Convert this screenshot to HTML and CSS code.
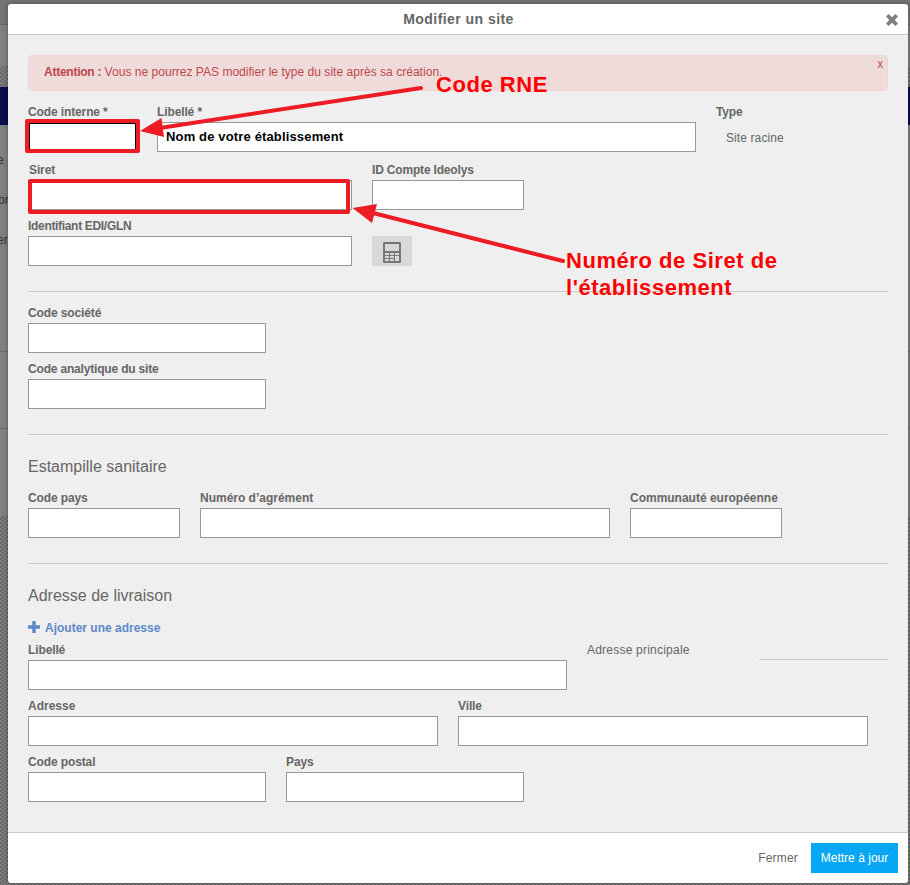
FILE: index.html
```html
<!DOCTYPE html>
<html lang="fr">
<head>
<meta charset="utf-8">
<title>Modifier un site</title>
<link rel="stylesheet" href="styles.css">
</head>
<body>
<div class="backdrop">
  <div class="bar-top"></div>
  <div class="bar-sub"></div>
  <div class="checker"></div>
  <div class="nav"></div>
  <div class="side"><span class="shift">e</span><span>pr</span><span class="shift">er</span></div>
  <div class="side-box"></div>
  <div class="side-end"></div>
</div>
<main class="modal">
  <header class="modal-head">
    <h1>Modifier un site</h1>
    <svg class="close" width="12" height="12" viewBox="0 0 12 12"><path d="M2.600 0 6 3.200 9.400 0 12 2.500 8.800 6l3.200 3.500L9.400 12 6 8.800 2.600 12 0 9.500 3.200 6 0 2.500z" fill="#808080"/></svg>
  </header>
  <section class="modal-body">
    <div class="alert"><p><b>Attention :</b> Vous ne pourrez PAS modifier le type du site après sa création.</p><span class="dismiss">x</span></div>
    <div class="row first">
      <div class="field w109"><label>Code interne *</label><input class="focused"></div>
      <div class="field w539"><label>Libellé *</label><input class="named" value="Nom de votre établissement"></div>
      <div class="field"><label>Type</label><p class="static">Site racine</p></div>
    </div>
    <div class="row">
      <div class="field w324"><label class="nudge">Siret</label><input></div>
      <div class="field w152"><label class="tight">ID Compte Ideolys</label><input></div>
    </div>
    <div class="row">
      <div class="field w324"><label class="tighter">Identifiant EDI/GLN</label><input></div>
      <button class="calc"><svg width="18" height="21" viewBox="0 0 18 21"><path fill="#777" fill-rule="evenodd" d="M1 0h16q1 0 1 1v19q0 1-1 1H1q-1 0-1-1V1q0-1 1-1zm1 2v7h14V2zM2 11v2h4v-2zm5 0v2h4v-2zm5 0v2h4v-2zM2 14v2h4v-2zm5 0v2h4v-2zm5 0v5h4v-5zM2 17v2h4v-2zm5 0v2h4v-2z"/></svg></button>
    </div>
    <hr>
    <div class="row"><div class="field w238"><label>Code société</label><input></div></div>
    <div class="row"><div class="field w238"><label class="tight">Code analytique du site</label><input></div></div>
    <hr>
    <h2>Estampille sanitaire</h2>
    <div class="row">
      <div class="field w152"><label>Code pays</label><input></div>
      <div class="field w410"><label class="normal">Numéro d’agrément</label><input></div>
      <div class="field w152"><label class="normal">Communauté européenne</label><input></div>
    </div>
    <hr>
    <h2>Adresse de livraison</h2>
    <a class="add"><svg width="12" height="12" viewBox="0 0 12 12"><path d="M4.300 0h3.400v4.300H12v3.400H7.700V12H4.300V7.700H0V4.300h4.300z" fill="#5e87c9"/></svg><span>Ajouter une adresse</span></a>
    <div class="row">
      <div class="field w539"><label>Libellé</label><input></div>
      <div class="main-address"><span>Adresse principale</span></div>
      <div class="rule"></div>
    </div>
    <div class="row">
      <div class="field w410"><label class="normal">Adresse</label><input></div>
      <div class="field w410"><label>Ville</label><input></div>
    </div>
    <div class="row">
      <div class="field w238"><label>Code postal</label><input></div>
      <div class="field w238"><label>Pays</label><input></div>
    </div>
  </section>
  <footer class="modal-foot"><a>Fermer</a><button class="save">Mettre à jour</button></footer>
</main>
<svg class="marks" width="910" height="885" viewBox="0 0 910 885">
  <g fill="none" stroke="#ed1c24" stroke-width="4" stroke-linejoin="round" stroke-linecap="round">
    <rect x="27" y="121" width="111" height="30"/>
    <rect x="30" y="181" width="318" height="31"/>
    <path d="M421 88 160 128M563 261 373 213"/>
  </g>
  <path d="M140 131 161.500 118 164 137zM352.500 208 377 204 372 223z" fill="#ed1c24"/>
</svg>
<p class="note note-code">Code RNE</p>
<p class="note note-siret">Numéro de Siret de<br>l'établissement</p>
</body>
</html>
```
FILE: styles.css
```css
* { box-sizing: border-box; }
body {
  margin: 0;
  height: 885px;
  overflow: hidden;
  position: relative;
  padding: 4px 2px 2px 8px;
  background: #808080;
  font: 12px/16px "Liberation Sans", Arial, sans-serif;
  color: #666;
}
h1, h2, p { margin: 0; }

.backdrop {
  position: absolute;
  inset: 0;
  display: flex;
  flex-direction: column;
}
.bar-top { height: 25px; background: #757575; border-bottom: 1px solid #686868; }
.bar-sub { height: 41px; background: #808080; }
.checker, .side-end {
  background: conic-gradient(#686868 25%, #808080 0 50%, #686868 0 75%, #808080 0) 0 0 / 4px 4px;
}
.checker { height: 21px; }
.nav { height: 38px; background: #0c0c4a; }
.side {
  height: 227px;
  padding-top: 15px;
  border-bottom: 1px solid #6b6b6b;
  display: flex;
  flex-direction: column;
  line-height: 40px;
  color: #333;
}
.side span { height: 40px; margin-left: -2px; }
.side .shift { margin-left: -3px; }
.side-box { height: 77px; border-bottom: 1px solid #6b6b6b; }
.side-end { margin-top: 87px; flex: 1; }

.modal {
  position: relative;
  height: 879px;
  display: flex;
  flex-direction: column;
  background: #fff;
  border-radius: 3px;
  overflow: hidden;
  box-shadow: 0 0 5px rgba(0, 0, 0, .35);
}
.modal-head {
  height: 31px;
  border-bottom: 1px solid #c8c8c8;
  display: flex;
  align-items: center;
  justify-content: center;
}
.modal-head h1 { font-size: 14px; line-height: 30px; margin-left: 11px; letter-spacing: .45px; flex: 1; text-align: center; }
.close { margin: 2px 10px 0 -12px; }
.modal-body {
  height: 797px;
  padding: 20px 20px 0;
  background: #efefef;
}
.alert {
  height: 36px;
  display: flex;
  justify-content: space-between;
  padding: 8px 4px 0 15px;
  border: 1px solid #eed3d7;
  border-radius: 4px;
  background: #f0dbdb;
  color: #bd4749;
  letter-spacing: .03px;
}
.alert b { letter-spacing: -.25px; }
.dismiss { font-size: 11px; letter-spacing: 0; height: 16px; margin-top: -9px; transform: scaleY(1.2); }

.row { display: flex; gap: 20px; height: 48px; margin-bottom: 8px; }
.row.first { margin: 13px 0 10px; }
.field label { display: block; height: 18px; font-weight: bold; white-space: nowrap; letter-spacing: -.12px; }
.field .nudge { padding-left: 1px; }
.field .tight { letter-spacing: -.18px; }
.field .tighter { letter-spacing: -.32px; }
.field .normal { letter-spacing: -.01px; }
input {
  display: block;
  width: 100%;
  height: 30px;
  margin: 0;
  padding: 0 8px;
  border: 1px solid #999;
  border-radius: 0;
  background: #fff;
}
.focused { border: 2px solid #000; }
.named { font: bold 13px "Liberation Sans", Arial, sans-serif; letter-spacing: .15px; color: #000; padding-bottom: 2px; }
.w109 { width: 109px; }
.w152 { width: 152px; }
.w238 { width: 238px; }
.w324 { width: 324px; }
.w410 { width: 410px; }
.w539 { width: 539px; }
.static { padding: 8px 0 0 10px; letter-spacing: .1px; }
.calc {
  align-self: flex-end;
  display: flex;
  align-items: center;
  justify-content: center;
  width: 40px;
  height: 30px;
  padding: 2px 0 0;
  border: 0;
  background: #d8d8d8;
}
hr { height: 1px; border: 0; margin: 25px 0 13px; background: #ccc; }
.row:has(+ hr) { margin-bottom: 0; }
h2 { font-size: 16px; font-weight: normal; line-height: 20px; margin: 22px 0 13px; }
hr:has(+ h2) { margin-bottom: 0; }
.add { display: flex; gap: 5px; height: 16px; align-items: center; margin-bottom: 7px; color: #5e87c9; font-weight: bold; }
.add span { padding-top: 1px; }
.main-address { width: 152px; letter-spacing: .22px; }
.rule { flex: 1; height: 1px; background: #ccc; margin-top: 17px; }

.modal-foot {
  height: 51px;
  border-top: 1px solid #c8c8c8;
  padding: 0 10px;
  display: flex;
  align-items: center;
  justify-content: flex-end;
  gap: 13px;
  letter-spacing: .2px;
}
.save { width: 87px; height: 30px; padding: 0; border: 0; background: #08a7f5; color: #fff; font: inherit; letter-spacing: .02px; white-space: nowrap; }

.marks { position: absolute; left: 0; top: 0; }
.note { position: absolute; font-size: 22px; font-weight: bold; line-height: 27px; letter-spacing: .54px; color: #f00; white-space: nowrap; }
.note-code { left: 436px; top: 71px; }
.note-siret { left: 566px; top: 247px; }
```
